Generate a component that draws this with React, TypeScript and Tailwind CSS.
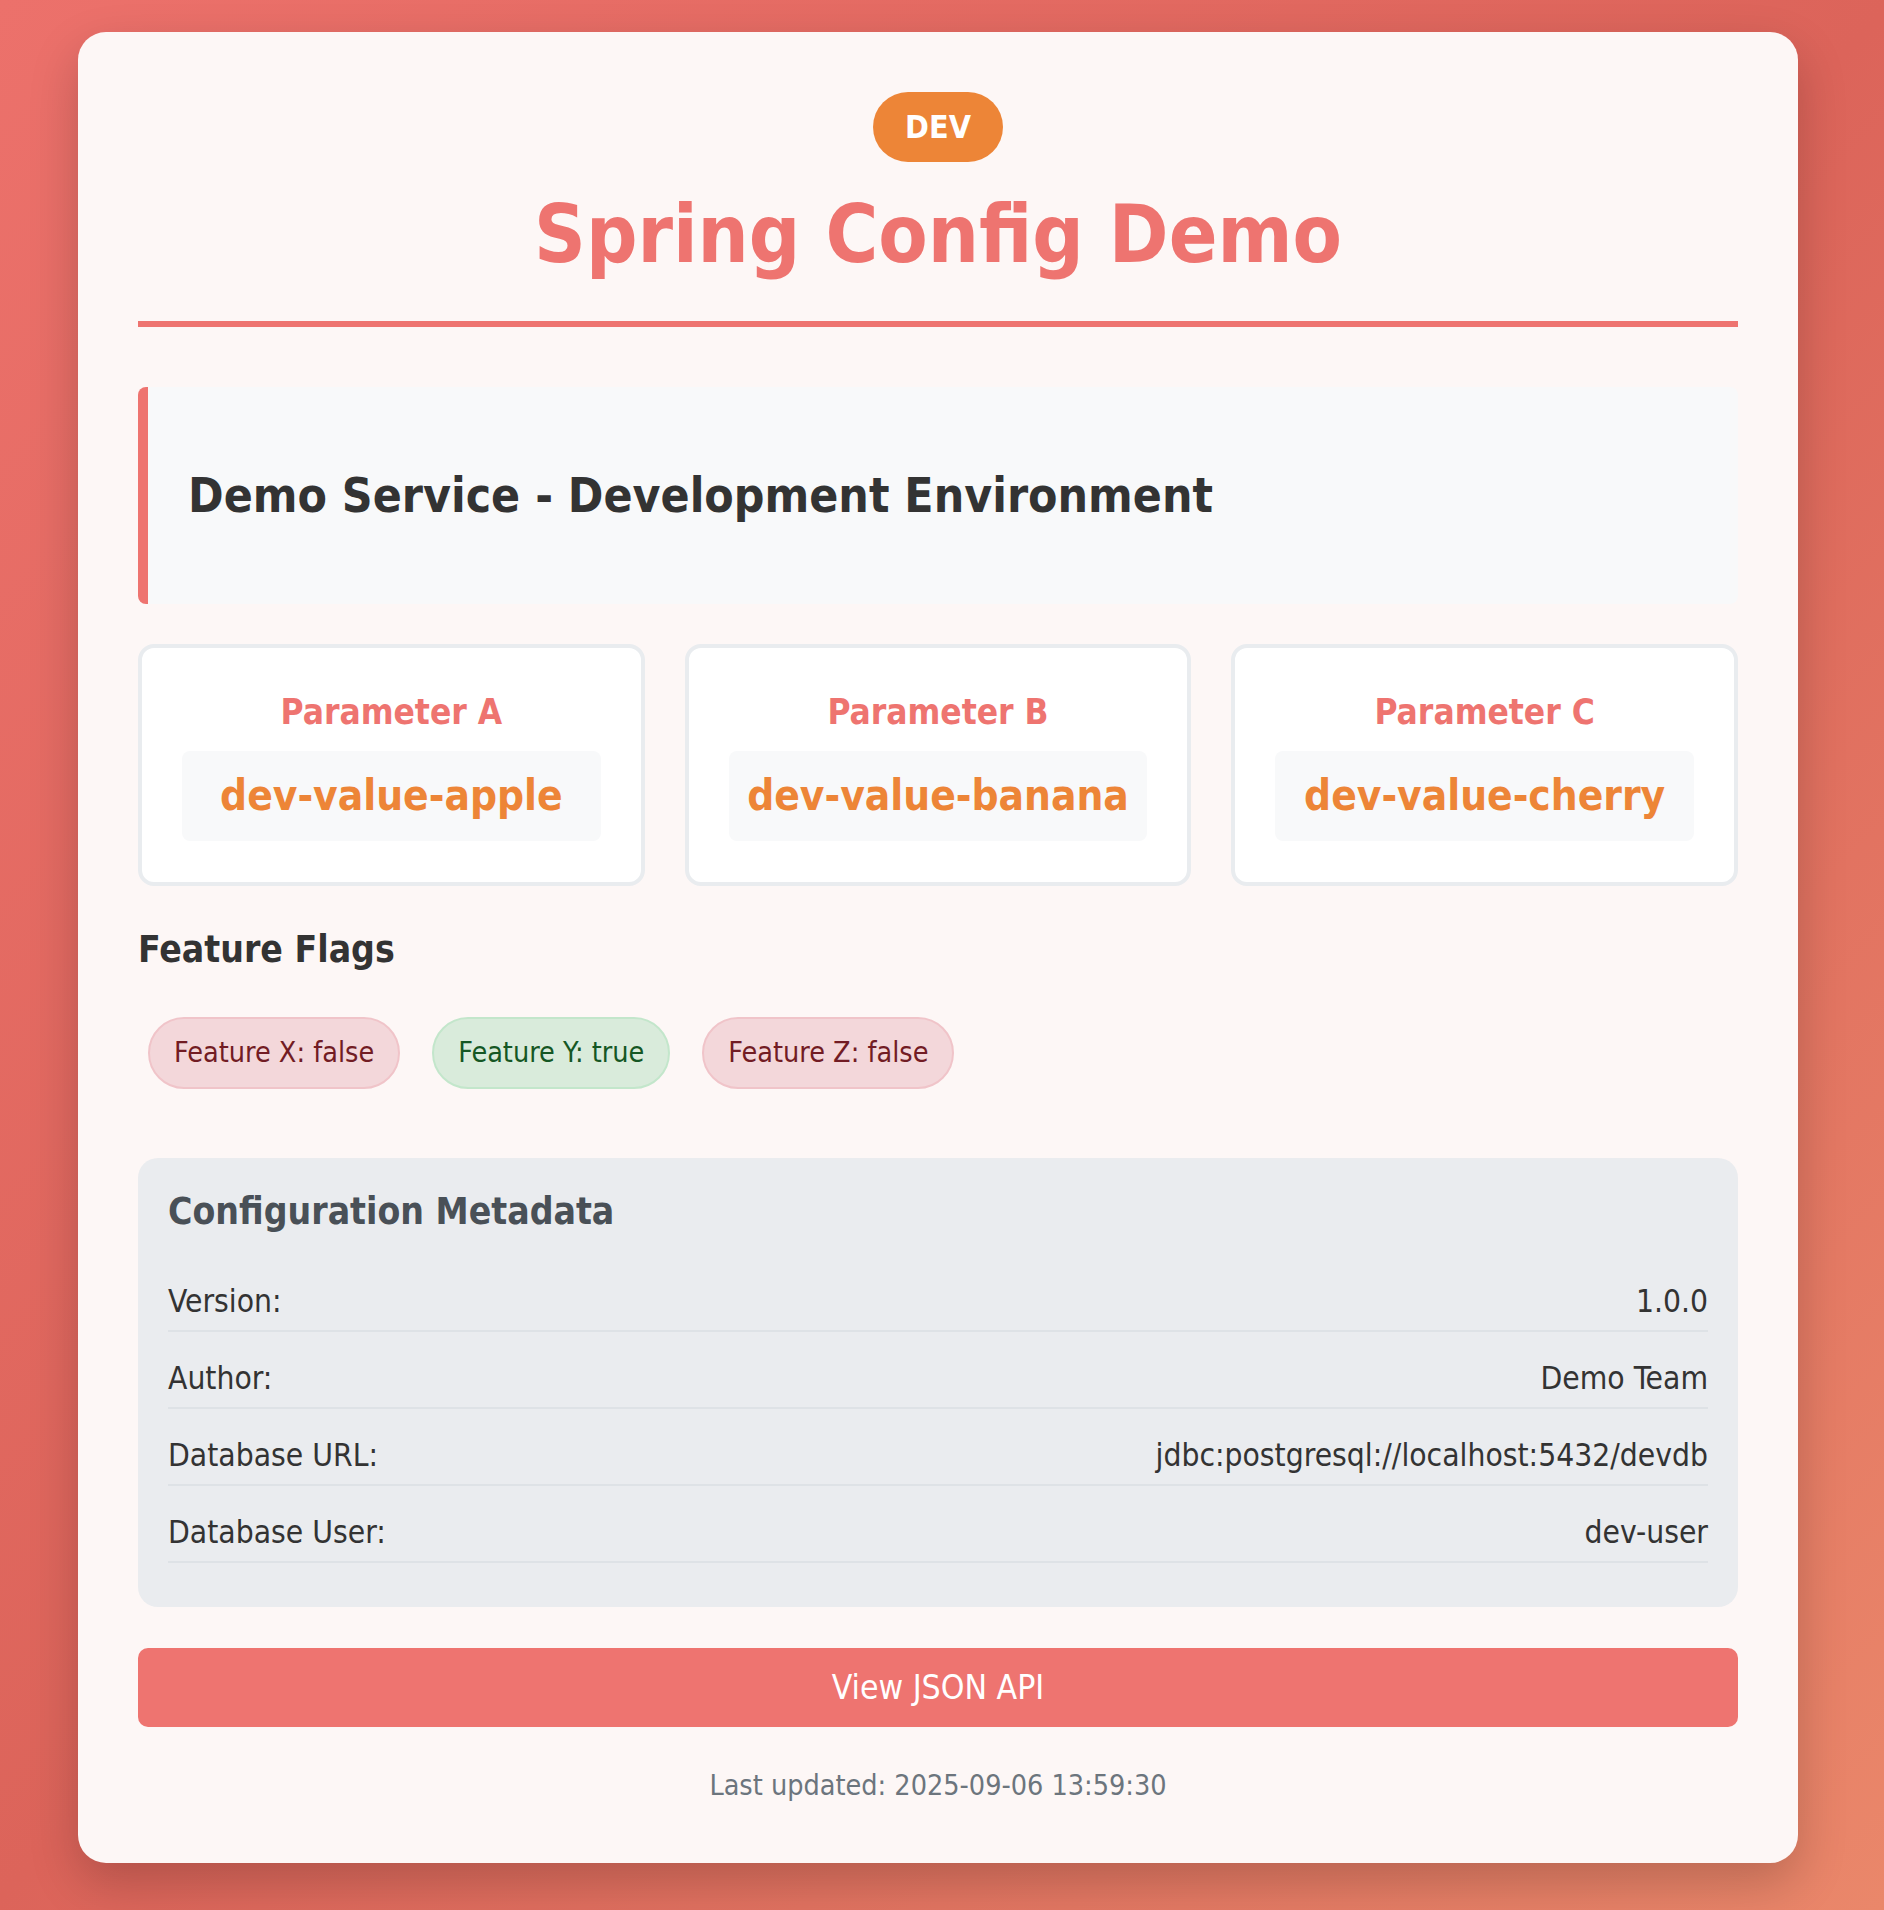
const flags = [
  { name: 'Feature X', on: false },
  { name: 'Feature Y', on: true },
  { name: 'Feature Z', on: false },
]

const params = [
  { label: 'Parameter A', value: 'dev-value-apple' },
  { label: 'Parameter B', value: 'dev-value-banana' },
  { label: 'Parameter C', value: 'dev-value-cherry' },
]

const meta = [
  { key: 'Version:', value: '1.0.0' },
  { key: 'Author:', value: 'Demo Team' },
  { key: 'Database URL:', value: 'jdbc:postgresql://localhost:5432/devdb' },
  { key: 'Database User:', value: 'dev-user' },
]

export default function App() {
  return (
    <div className="min-h-screen bg-[linear-gradient(135deg,#ec716b_0%,#dc645a_50%,#ea876a_100%)] pl-[78px] pr-[86px] pt-[32px] pb-[47px] font-['DejaVu_Sans_Condensed','DejaVu_Sans',sans-serif]">
      <div className="bg-[#fdf7f6] rounded-[28px] shadow-[0_20px_50px_rgba(0,0,0,0.2)] px-[60px] pt-[60px] pb-[60px]">
        {/* Header */}
        <div className="flex flex-col items-center border-b-[6px] border-[#ee7470] pb-[39px]">
          <span className="rounded-full bg-[#ed8537] text-white font-bold text-[32px] leading-[38px] px-[32px] py-[16px]">
            DEV
          </span>
          <h1 className="mt-[25px] text-[80px] leading-[95px] font-bold text-[#ee7470]">
            Spring Config Demo
          </h1>
        </div>

        {/* Service name */}
        <div className="mt-[60px] bg-[#f8f9fa] border-l-[10px] border-[#ee7470] rounded-[8px] pl-[40px] py-[80px]">
          <h2 className="text-[47.7px] leading-[57px] font-bold text-[#333]">
            Demo Service - Development Environment
          </h2>
        </div>

        {/* Parameters */}
        <div className="grid grid-cols-3 gap-[40px] mt-[40px]">
          {params.map((p) => (
            <div
              key={p.label}
              className="bg-white border-[4px] border-[#e9ecef] rounded-[16px] px-[40px] pt-[43px] pb-[41px] text-center"
            >
              <div className="text-[35px] leading-[42px] font-bold text-[#ee7470]">{p.label}</div>
              <div className="mt-[18px] bg-[#f8f9fa] rounded-[8px] py-[20px] text-[42px] leading-[50px] font-bold text-[#ed8537]">
                {p.value}
              </div>
            </div>
          ))}
        </div>

        {/* Feature flags */}
        <h3 className="mt-[42px] text-[37px] leading-[43px] font-bold text-[#333]">Feature Flags</h3>
        <div className="mt-[46px] flex gap-[32px] pl-[10px]">
          {flags.map((f) => (
            <span
              key={f.name}
              className={`rounded-full border-2 px-[24px] py-[17px] text-[28.5px] leading-[34px] ${
                f.on
                  ? 'bg-[#d9ebdb] border-[#c3e6cb] text-[#155724]'
                  : 'bg-[#f3d7da] border-[#f0c4c9] text-[#721c24]'
              }`}
            >
              {f.name}: {f.on ? 'true' : 'false'}
            </span>
          ))}
        </div>

        {/* Metadata */}
        <div className="mt-[69px] bg-[#eaecef] rounded-[20px] px-[30px] pt-[32px] pb-[44px]">
          <h4 className="text-[37px] leading-[44px] font-bold text-[#495057]">Configuration Metadata</h4>
          <div className="mt-[21px]">
            {meta.map((m) => (
              <div
                key={m.key}
                className="flex justify-between pt-[27px] pb-[10px] border-b-2 border-[#dee2e6] text-[31.5px] leading-[38px] text-[#333]"
              >
                <span>{m.key}</span>
                <span>{m.value}</span>
              </div>
            ))}
          </div>
        </div>

        <button className="mt-[41px] block w-full bg-[#ee7470] rounded-[10px] py-[20px] text-white text-[33.5px] leading-[39px] text-center">
          View JSON API
        </button>

        <p className="mt-[42px] text-center text-[28.5px] leading-[34px] text-[#6c757d]">
          Last updated: 2025-09-06 13:59:30
        </p>
      </div>
    </div>
  )
}
